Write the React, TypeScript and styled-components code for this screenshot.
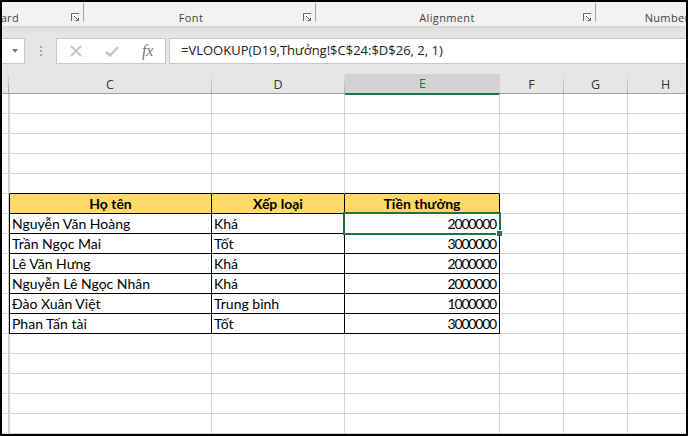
import styled, { createGlobalStyle } from "styled-components"

const GlobalStyle = createGlobalStyle`
	html, body {
		margin: 0;
		padding: 0;
		background: black;
	}
`

const COLUMNS = "7px 203px 133px 155px 64px 64px 76px"
const GRID_LINE = "#d4d4d4"
const GREEN = "#217346"

const Frame = styled.div`
	box-sizing: border-box;
	width: 688px;
	height: 436px;
	border: 2px solid black;
	overflow: hidden;
	display: flex;
	flex-direction: column;
	background: white;
`

const Ribbon = styled.div`
	display: flex;
	flex: none;
	height: 24px;
	background: #f3f2f1;
	border-bottom: 1px solid #d2d2d2;
	overflow: hidden;
	font-family: "Open Sans", sans-serif;
	font-size: 11px;
	letter-spacing: 0.35px;
	color: #444;
`

const Group = styled.div<{ $width: number; $offset?: number }>`
	display: flex;
	flex: none;
	box-sizing: border-box;
	width: ${({ $width }) => $width}px;
	margin-left: ${({ $offset }) => $offset || 0}px;
	height: 20px;
	border-right: 1px solid #a6a6a6;
	align-items: flex-end;
`

const GroupLabel = styled.div`
	flex: 1;
	text-align: center;
	white-space: nowrap;
	line-height: 14px;
	margin-bottom: -3px;
`

const Launcher = styled.svg`
	flex: none;
	width: 9px;
	height: 9px;
	margin: 0 3px 0 5px;
`

const FormulaBar = styled.div`
	display: flex;
	flex: none;
	box-sizing: border-box;
	height: 47px;
	padding: 11px 0 10px;
	align-items: stretch;
	background: linear-gradient(#dcdcdc, #e6e6e6 7px);
	font-family: "Open Sans", sans-serif;
`

const InputBox = styled.div`
	box-sizing: border-box;
	background: white;
	border: 1px solid #c8c8c8;
`

const NameBox = styled(InputBox)`
	display: flex;
	width: 23px;
	border-left: none;
	align-items: center;
	justify-content: flex-end;
	padding-right: 6px;
`

const Caret = styled.div`
	width: 0;
	height: 0;
	border-left: 3.5px solid transparent;
	border-right: 3.5px solid transparent;
	border-top: 4px solid #7c7c7c;
`

const Grip = styled.div`
	display: flex;
	flex-direction: column;
	width: 2px;
	margin: 0 14px 0 15px;
	gap: 2px;
	justify-content: center;
`

const GripDot = styled.span`
	width: 2px;
	height: 2px;
	background: #a8a8a8;
`

const ActionBox = styled(InputBox)`
	position: relative;
	display: flex;
	width: 110px;
	margin-right: 3px;
	align-items: center;
	padding-left: 13px;
`

const ActionIcon = styled.svg<{ $gap: number }>`
	flex: none;
	margin-right: ${({ $gap }) => $gap}px;
`

const Fx = styled.span`
	font-family: "Liberation Serif", serif;
	font-style: italic;
	font-size: 16px;
	color: #7a7a7a;
	letter-spacing: -0.3px;
`

const FormulaInput = styled(InputBox)`
	flex: 1;
	border-right: none;
	padding-left: 11px;
	font-size: 13px;
	line-height: 23px;
	color: #222;
	white-space: nowrap;
	overflow: hidden;
`

const HeaderRow = styled.div`
	display: grid;
	flex: none;
	grid-template-columns: ${COLUMNS};
	height: 20px;
	box-sizing: border-box;
	background: #e6e6e6;
	border-bottom: 1px solid #a0a0a0;
	font-family: "Open Sans", sans-serif;
	font-size: 12.5px;
	color: #333;
`

const ColumnHead = styled.div<{ $selected?: boolean }>`
	display: flex;
	align-items: center;
	justify-content: center;
	box-sizing: border-box;
	border-right: 1px solid transparent;
	border-image: linear-gradient(transparent, #a8a8a8) 1;
	${({ $selected }) => $selected && `
		background: #d2d2d2;
		color: ${GREEN};
		height: 21px;
		border-bottom: 2px solid ${GREEN};
		border-image: none;
		border-right: none;
	`}
`

const Corner = styled.div`
	border-right: 1px solid transparent;
	border-image: linear-gradient(#e6e6e6, #9a9a9a) 1;
`

const Sheet = styled.div`
	flex: 1;
	display: flex;
	flex-direction: column;
	font-family: Lato, sans-serif;
	font-size: 14px;
	color: black;
`

const Row = styled.div`
	display: grid;
	grid-template-columns: ${COLUMNS};
	height: 20px;
	flex: none;
`

const Gutter = styled.div`
	box-sizing: border-box;
	border-right: 1px solid #d0d0d0;
	border-bottom: 1px solid ${GRID_LINE};
`

const Cell = styled.div<{
	$left?: string
	$right?: string
	$bottom?: string
	$head?: boolean
	$number?: boolean
}>`
	position: relative;
	display: flex;
	box-sizing: border-box;
	align-items: center;
	white-space: nowrap;
	padding: 0 2px;
	border-right: 1px solid ${({ $right }) => $right || GRID_LINE};
	border-bottom: 1px solid ${({ $bottom }) => $bottom || GRID_LINE};
	${({ $left }) => $left && `border-left: 1px solid ${$left};`}
	${({ $number }) => $number && `
		justify-content: flex-end;
		letter-spacing: -1.2px;
		padding-right: 3px;
	`}
	${({ $head }) => $head && `
		justify-content: center;
		background: #ffd966;
		font-weight: 700;
	`}
`

const Selection = styled.div`
	position: absolute;
	z-index: 2;
	top: -2px;
	left: -2px;
	right: -2px;
	bottom: -2px;
	border: 2px solid ${GREEN};
`

const Handle = styled.div`
	position: absolute;
	box-sizing: border-box;
	right: -3px;
	bottom: -3px;
	width: 6px;
	height: 6px;
	background: ${GREEN};
	border-left: 1px solid white;
	border-top: 1px solid white;
`

const people = [
	{ name: "Nguyễn Văn Hoàng", grade: "Khá", bonus: "2000000" },
	{ name: "Trần Ngọc Mai", grade: "Tốt", bonus: "3000000" },
	{ name: "Lê Văn Hưng", grade: "Khá", bonus: "2000000" },
	{ name: "Nguyễn Lê Ngọc Nhân", grade: "Khá", bonus: "2000000" },
	{ name: "Đào Xuân Việt", grade: "Trung bình", bonus: "1000000" },
	{ name: "Phan Tấn tài", grade: "Tốt", bonus: "3000000" },
]

const LauncherIcon = () => (
	<Launcher viewBox="0 0 9 9" fill="none" stroke="#666" strokeWidth="1">
		<path d="M0.5 8V0.5H8" />
		<path d="M3 3L7.5 7.5M4.5 7.5H7.5V4.5" />
	</Launcher>
)

const EmptyRow = ({ lineBelow }: { lineBelow?: boolean }) => {
	const bottom = lineBelow ? "black" : undefined
	return (
		<Row>
			<Gutter />
			<Cell $left={GRID_LINE} $bottom={bottom} />
			<Cell $bottom={bottom} />
			<Cell $bottom={bottom} />
			<Cell />
			<Cell />
			<Cell />
		</Row>
	)
}

const TableRow = ({ cells, head, selected }: { cells: string[]; head?: boolean; selected?: boolean }) => (
	<Row>
		<Gutter />
		<Cell $left="black" $right="black" $bottom="black" $head={head}>{cells[0]}</Cell>
		<Cell $right="black" $bottom="black" $head={head}>{cells[1]}</Cell>
		<Cell $right="black" $bottom="black" $head={head} $number={!head}>
			{cells[2]}
			{selected && (
				<Selection>
					<Handle />
				</Selection>
			)}
		</Cell>
		<Cell />
		<Cell />
		<Cell />
	</Row>
)

export default function App() {
	return (
		<>
			<GlobalStyle />
			<Frame>
				<Ribbon>
					<Group $width={165} $offset={-83}>
						<GroupLabel>Clipboard</GroupLabel>
						<LauncherIcon />
					</Group>
					<Group $width={232}>
						<GroupLabel>Font</GroupLabel>
						<LauncherIcon />
					</Group>
					<Group $width={280}>
						<GroupLabel>Alignment</GroupLabel>
						<LauncherIcon />
					</Group>
					<Group $width={160}>
						<GroupLabel>Number</GroupLabel>
						<LauncherIcon />
					</Group>
				</Ribbon>
				<FormulaBar>
					<NameBox><Caret /></NameBox>
					<Grip>
						<GripDot />
						<GripDot />
						<GripDot />
					</Grip>
					<ActionBox>
						<ActionIcon $gap={23} width="12" height="12" viewBox="0 0 12 12" fill="none" stroke="#c6c6c6" strokeWidth="1.8">
							<path d="M1 1L11 11M11 1L1 11" />
						</ActionIcon>
						<ActionIcon $gap={23} width="14" height="11" viewBox="0 0 14 11" fill="none" stroke="#c6c6c6" strokeWidth="2.4">
							<path d="M1 6L5 9.5L13 1" />
						</ActionIcon>
						<Fx>fx</Fx>
					</ActionBox>
					<FormulaInput>=VLOOKUP(D19,Thưởng!$C$24:$D$26, 2, 1)</FormulaInput>
				</FormulaBar>
				<HeaderRow>
					<Corner />
					<ColumnHead>C</ColumnHead>
					<ColumnHead>D</ColumnHead>
					<ColumnHead $selected>E</ColumnHead>
					<ColumnHead>F</ColumnHead>
					<ColumnHead>G</ColumnHead>
					<ColumnHead>H</ColumnHead>
				</HeaderRow>
				<Sheet>
					<EmptyRow />
					<EmptyRow />
					<EmptyRow />
					<EmptyRow />
					<EmptyRow lineBelow />
					<TableRow head cells={["Họ tên", "Xếp loại", "Tiền thưởng"]} />
					{people.map((p, i) => (
						<TableRow key={p.name} selected={i === 0} cells={[p.name, p.grade, p.bonus]} />
					))}
					<EmptyRow />
					<EmptyRow />
					<EmptyRow />
					<EmptyRow />
					<EmptyRow />
				</Sheet>
			</Frame>
		</>
	)
}
